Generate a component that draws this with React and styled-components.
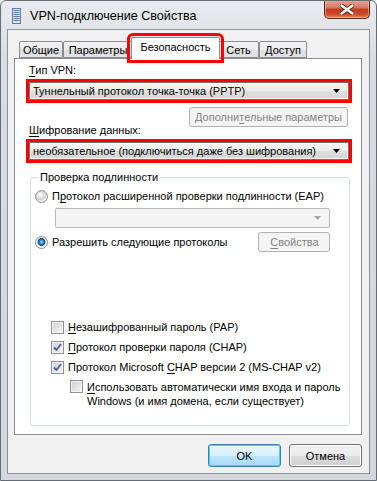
import React from "react";
import styled, { createGlobalStyle } from "styled-components";

const GlobalStyle = createGlobalStyle`
  html, body {
    margin: 0;
    padding: 0;
    background: #fff;
  }
  body {
    font-family: "Liberation Sans", Arial, sans-serif;
    font-size: 11px;
    color: #000;
  }
  u {
    text-decoration-thickness: 1px;
    text-underline-offset: 2px;
  }
`;

const tabs = ["Общие", "Параметры", "Безопасность", "Сеть", "Доступ"];
const tabWidths = [44, 70, 89, 41, 48];

function TitleIcon() {
  return (
    <svg width="9" height="16" viewBox="0 0 9 16">
      <rect x="0.5" y="0.5" width="8" height="15" fill="#dfe6ee" stroke="#6a7b8e" />
      {[2, 4, 6, 8, 10, 12].map((y) => (
        <rect key={y} x="1.5" y={y} width="6" height="1" fill="#4f79a8" />
      ))}
    </svg>
  );
}

function CloseGlyph() {
  return (
    <svg width="14" height="11" viewBox="0 0 14 11">
      <path
        d="M1.5 1.5 L12.5 9.5 M12.5 1.5 L1.5 9.5"
        stroke="#5a2a22"
        strokeWidth="4.2"
        strokeLinecap="round"
      />
      <path
        d="M1.5 1.5 L12.5 9.5 M12.5 1.5 L1.5 9.5"
        stroke="#fff"
        strokeWidth="2.4"
        strokeLinecap="round"
      />
    </svg>
  );
}

function Arrow({ disabled }) {
  return (
    <svg width="7" height="4" viewBox="0 0 7 4">
      <path d="M0 0 H7 L3.5 4 Z" fill={disabled ? "#a5a5a5" : "#000"} />
    </svg>
  );
}

function Check() {
  return (
    <svg width="9" height="9" viewBox="0 0 9 9">
      <path
        d="M1 4.5 L3.5 7 L8 1"
        fill="none"
        stroke="#4a5f97"
        strokeWidth="1.8"
      />
    </svg>
  );
}

export default function App() {
  return (
    <>
      <GlobalStyle />
      <Window>
        <TitleBar>
          <IconSlot>
            <TitleIcon />
          </IconSlot>
          <Title>VPN-подключение Свойства</Title>
          <CloseButton>
            <CloseGlyph />
          </CloseButton>
        </TitleBar>

        <Client>
          <TabStrip>
            {tabs.map((t, i) => (
              <Tab key={t} $active={i === 2} $width={tabWidths[i]}>
                {t}
              </Tab>
            ))}
          </TabStrip>

          <Panel>
            <Label>
              <u>Т</u>ип VPN:
            </Label>
            <Highlight>
              <Combo>
                <span>Туннельный протокол точка-точка (PPTP)</span>
                <Arrow />
              </Combo>
            </Highlight>
            <Button $disabled $width={159} $align="flex-end" $mr={4} $mt={4}>
              Дополни<u>т</u>ельные параметры
            </Button>
            <Label $mt={-4}>
              <u>Ш</u>ифрование данных:
            </Label>
            <Highlight>
              <Combo>
                <span>необязательное (подключиться даже без шифрования)</span>
                <Arrow />
              </Combo>
            </Highlight>

            <Group>
              <Legend>Проверка подлинности</Legend>
              <OptionRow $mt={4}>
                <Radio />
                <span>
                  П<u>р</u>отокол расширенной проверки подлинности (EAP)
                </span>
              </OptionRow>
              <Combo $disabled $ml={20} $mr={10} $mt={4}>
                <span />
                <Arrow disabled />
              </Combo>
              <SplitRow>
                <OptionRow>
                  <Radio $checked />
                  <span>
                    Разрешить сле<u>д</u>ующие протоколы
                  </span>
                </OptionRow>
                <Button $disabled $width={72}>
                  <u>С</u>войства
                </Button>
              </SplitRow>

              <CheckList>
                <OptionRow>
                  <CheckBox />
                  <span>
                    <u>Н</u>езашифрованный пароль (PAP)
                  </span>
                </OptionRow>
                <OptionRow>
                  <CheckBox>
                    <Check />
                  </CheckBox>
                  <span>
                    <u>П</u>ротокол проверки пароля (CHAP)
                  </span>
                </OptionRow>
                <OptionRow>
                  <CheckBox>
                    <Check />
                  </CheckBox>
                  <span>
                    Протокол Microsoft <u>C</u>HAP версии 2 (MS-CHAP v2)
                  </span>
                </OptionRow>
                <OptionRow $indent={19} $wrap>
                  <CheckBox />
                  <span>
                    <u>И</u>спользовать автоматически имя входа и пароль
                    <br />
                    Windows (и имя домена, если существует)
                  </span>
                </OptionRow>
              </CheckList>
            </Group>
          </Panel>

          <ButtonBar>
            <Button $default $width={73} $height={23}>
              OK
            </Button>
            <Button $width={73} $height={23}>
              Отмена
            </Button>
          </ButtonBar>
        </Client>
      </Window>
    </>
  );
}

const Window = styled.div`
  width: 377px;
  height: 481px;
  box-sizing: border-box;
  border: 1px solid #656c74;
  border-radius: 6px 6px 0 0;
  background: linear-gradient(#e8ebee, #d9dde2 60px, #d2d7dc);
  display: flex;
  flex-direction: column;
  overflow: hidden;
`;

const TitleBar = styled.div`
  height: 28px;
  display: flex;
  align-items: flex-start;
  flex-shrink: 0;
`;

const IconSlot = styled.div`
  margin: 7px 0 0 11px;
  width: 9px;
  height: 16px;
`;

const Title = styled.div`
  margin: 7px 0 0 9px;
  font-size: 12.6px;
  line-height: 16px;
  color: #000;
  flex: 1;
`;

const CloseButton = styled.div`
  width: 46px;
  height: 19px;
  margin: -1px 6px 0 0;
  box-sizing: border-box;
  border: 1px solid #5b2419;
  border-top: none;
  border-radius: 0 0 5px 5px;
  background: linear-gradient(#e9a899, #d4765f 45%, #c1391f 50%, #cf4b2c 80%, #e08a5e);
  box-shadow: inset 0 0 0 1px rgba(255, 220, 200, 0.45);
  display: flex;
  align-items: center;
  justify-content: center;
`;

const Client = styled.div`
  flex: 1;
  margin: 0 6px 6px;
  border: 1px solid #8a929b;
  background: #f0f0f0;
  padding: 7px 7px 0 6px;
  display: flex;
  flex-direction: column;
`;

const TabStrip = styled.div`
  height: 21px;
  display: flex;
  align-items: flex-end;
  padding-left: 5px;
`;

const Tab = styled.div`
  box-sizing: border-box;
  width: ${(p) => p.$width}px;
  flex-shrink: 0;
  height: ${(p) => (p.$active ? "22px" : "17px")};
  margin: ${(p) => (p.$active ? "0 -2px -1px -2px" : "0")};
  border: 1px solid #898c95;
  border-bottom: ${(p) => (p.$active ? "none" : "1px solid #898c95")};
  border-radius: 2px 2px 0 0;
  background: ${(p) =>
    p.$active ? "#fff" : "linear-gradient(#f3f3f3, #ebebeb 50%, #dedede 51%, #e3e3e3)"};
  display: flex;
  align-items: center;
  justify-content: center;
  padding-bottom: ${(p) => (p.$active ? "3px" : "0")};
  white-space: nowrap;
  overflow: hidden;
  position: relative;
  z-index: ${(p) => (p.$active ? 1 : 0)};
  outline: ${(p) => (p.$active ? "3px solid #ff0000" : "none")};
  outline-offset: 1px;
`;

const Panel = styled.div`
  height: 377px;
  box-sizing: border-box;
  border: 1px solid #898c95;
  background: #fff;
  padding: 0 9px 0 11px;
  display: flex;
  flex-direction: column;
`;

const Label = styled.div`
  line-height: 15px;
  margin: ${(p) => p.$mt ?? 4}px 0 1px 3px;
`;

const Highlight = styled.div`
  border: 3px solid #ff0000;
`;

const Combo = styled.div`
  height: ${(p) => (p.$disabled ? "20px" : "18px")};
  box-sizing: border-box;
  margin: ${(p) => `${p.$mt ?? 0}px ${p.$mr ?? 0}px 0 ${p.$ml ?? 0}px`};
  border: 1px solid ${(p) => (p.$disabled ? "#b4b9bd" : "#707070")};
  border-radius: ${(p) => (p.$disabled ? "2px" : "0")};
  background: ${(p) =>
    p.$disabled ? "#f4f4f4" : "linear-gradient(#f4f4f4, #ececec 50%, #dfdfdf 51%, #d5d5d5)"};
  box-shadow: ${(p) => (p.$disabled ? "none" : "inset 0 0 0 1px #fbfbfb")};
  display: flex;
  align-items: center;
  justify-content: space-between;
  padding: 0 8px 0 3px;
  white-space: nowrap;
`;

const Button = styled.div`
  width: ${(p) => p.$width}px;
  height: ${(p) => p.$height ?? 20}px;
  box-sizing: border-box;
  align-self: ${(p) => p.$align ?? "auto"};
  margin-top: ${(p) => p.$mt ?? 0}px;
  margin-right: ${(p) => p.$mr ?? 0}px;
  border: 1px solid
    ${(p) => (p.$disabled ? "#adb2b5" : p.$default ? "#3c7fb1" : "#707070")};
  border-radius: 3px;
  background: ${(p) =>
    p.$disabled
      ? "#f4f4f4"
      : p.$default
      ? "linear-gradient(#eaf6fd, #d9f0fc 50%, #bee6fd 51%, #a7d9f5)"
      : "linear-gradient(#f2f2f2, #ebebeb 50%, #dddddd 51%, #cfcfcf)"};
  box-shadow: ${(p) =>
    p.$disabled ? "none" : p.$default ? "inset 0 0 0 1px #48d4f8" : "inset 0 0 0 1px #fcfcfc"};
  color: ${(p) => (p.$disabled ? "#838383" : "#000")};
  display: flex;
  align-items: center;
  justify-content: center;
  white-space: nowrap;
`;

const Group = styled.fieldset`
  box-sizing: border-box;
  height: 256px;
  margin: 7px 13px 0 4px;
  padding: 0 9px 0 4px;
  border: 1px solid #d5dfe5;
  border-radius: 3px;
  display: flex;
  flex-direction: column;
`;

const Legend = styled.legend`
  margin-left: 3px;
  padding: 0 2px;
  line-height: 15px;
`;

const OptionRow = styled.div`
  display: flex;
  align-items: ${(p) => (p.$wrap ? "flex-start" : "center")};
  gap: 4px;
  margin-top: ${(p) => p.$mt ?? 0}px;
  margin-left: ${(p) => p.$indent ?? 0}px;
  line-height: ${(p) => (p.$wrap ? "14px" : "15px")};
  white-space: nowrap;
`;

const SplitRow = styled.div`
  display: flex;
  align-items: center;
  justify-content: space-between;
  margin-top: 4px;
  margin-right: 10px;
`;

const Radio = styled.span`
  width: 13px;
  height: 13px;
  box-sizing: border-box;
  flex-shrink: 0;
  border-radius: 50%;
  border: 1px solid #8e8f8f;
  background: ${(p) =>
    p.$checked
      ? "radial-gradient(circle at 50% 45%, #b9e4ff 0, #3aa0e6 1.5px, #1c5d9a 3px, #14456f 3.6px, #e6e6e6 4.2px, #f7f7f7 5px)"
      : "radial-gradient(circle at 40% 35%, #ffffff 0, #e3e3e3 3px, #cfcfcf 5px, #f0f0f0 6px)"};
`;

const CheckList = styled.div`
  margin-top: 68px;
  margin-left: 16px;
  display: flex;
  flex-direction: column;
  gap: 5px;
`;

const CheckBox = styled.span`
  width: 13px;
  height: 13px;
  box-sizing: border-box;
  flex-shrink: 0;
  border: 1px solid #8e8f8f;
  box-shadow: inset 0 0 0 1px #f4f4f4;
  background: linear-gradient(135deg, #cbcfd5, #f6f6f6);
  display: flex;
  align-items: center;
  justify-content: center;
`;

const ButtonBar = styled.div`
  display: flex;
  justify-content: flex-end;
  gap: 8px;
  margin-top: 9px;
`;
